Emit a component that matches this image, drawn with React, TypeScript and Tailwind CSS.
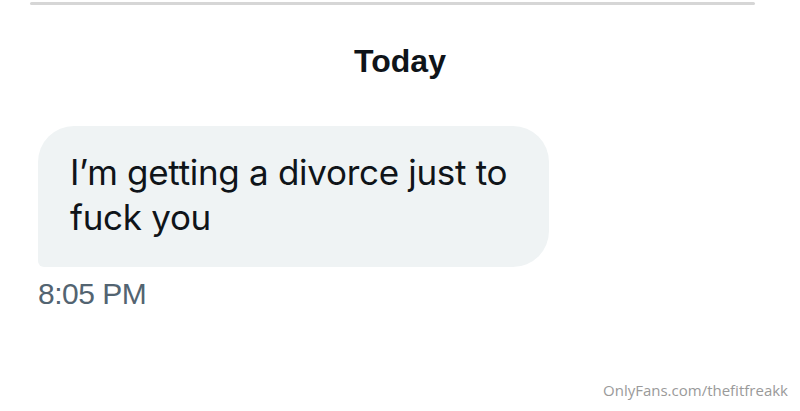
export default function App() {
  return (
    <div className="relative w-[800px] h-[411px] overflow-hidden bg-white">
      <div className="mx-[30px] mt-[2px] h-[3px] w-[725px] rounded-full bg-[#d6d6d6]" />
      <div className="pt-[36px] text-center font-['Liberation_Sans',sans-serif] text-[32px] font-bold leading-[40px] text-[#0f1419]">
        Today
      </div>
      <div className="ml-[38px] mt-[45px] w-[511px] rounded-[36px] rounded-bl-[6px] bg-[#eff3f4] pb-[27px] pl-[32px] pr-[20px] pt-[24px] font-['Inter',sans-serif] text-[35px] leading-[45px] tracking-[-0.3px] text-[#0f1419]">
        I’m getting a divorce just to fuck you
      </div>
      <div className="ml-[38px] mt-[10px] font-['Liberation_Sans',sans-serif] text-[30px] leading-[34px] tracking-[-0.5px] text-[#536471]">
        8:05 PM
      </div>
      <div className="absolute bottom-[10px] right-[12px] font-['Open_Sans',sans-serif] text-[15px] text-[#9a9a9a]">
        OnlyFans.com/thefitfreakk
      </div>
    </div>
  )
}
